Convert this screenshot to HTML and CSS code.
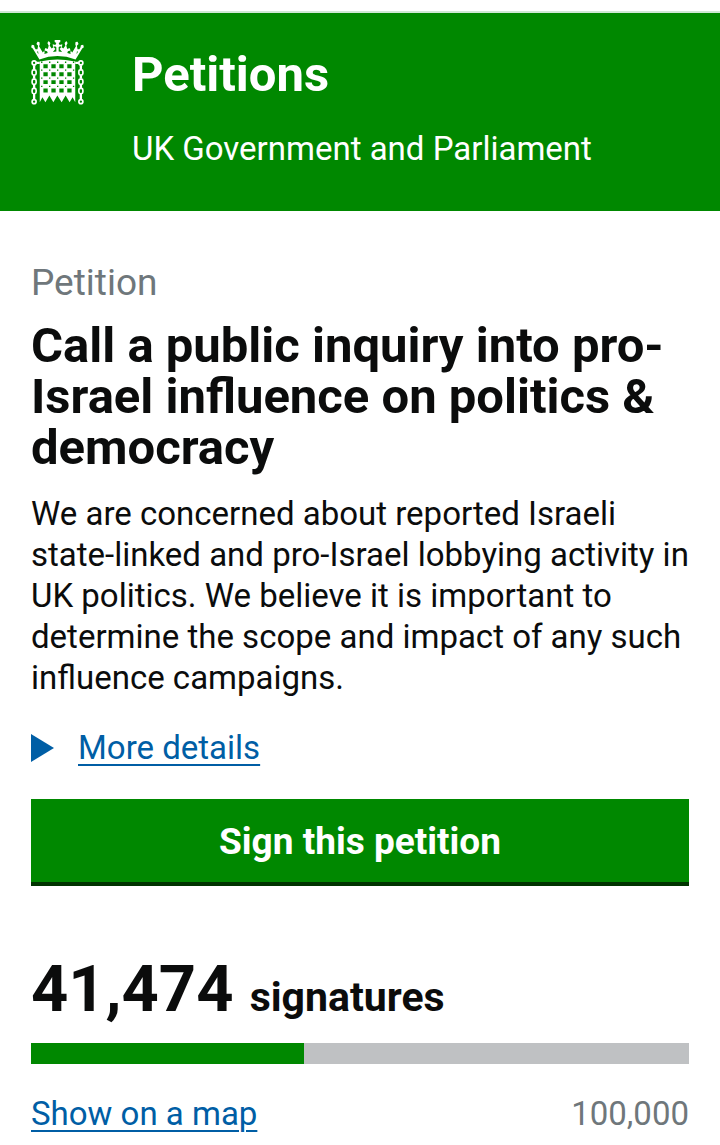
FILE: index.html
```html
<!DOCTYPE html>
<html lang="en">
  <head>
    <meta charset="UTF-8" />
    <meta name="viewport" content="width=device-width, initial-scale=1.0" />
    <title>Call a public inquiry into pro-Israel influence on politics & democracy - Petitions</title>
    <link rel="stylesheet" href="styles.css">
  </head>

  <body>
    <header class="header">
      <svg class="crest" viewBox="33 30 159 196" fill="#fff" aria-hidden="true">
        <!-- crown -->
        <path d="M58 89 L38 56 L33 52 L35 44 L42 46 L43 52 L55 73 L54 65 L46 65 L45 57 L52 58 L54 47 L49 42 L52 35 L58 36 L59 43 L57 49 L68 68 L71 64 L74 65 L73 72 L83 69 L81 64 L73 62 L76 54 L83 57 L86 47 L82 39 L86 33 L91 39 L89 47 L95 56 L101 51 L106 57 L101 63 L99 66 L109 65 L109 52 L105 49 L99 51 L98 43 L106 45 L109 39 L104 36 L104 30 L121 30 L121 36 L116 39 L119 45 L127 43 L126 51 L120 49 L116 52 L116 65 L126 66 L124 63 L119 57 L124 51 L130 56 L136 47 L134 39 L139 33 L143 39 L139 47 L142 57 L149 54 L152 62 L144 64 L142 69 L152 72 L151 65 L154 64 L157 68 L168 49 L166 43 L167 36 L173 35 L176 42 L171 47 L173 58 L180 57 L179 65 L171 65 L170 73 L182 52 L183 46 L190 44 L192 52 L187 56 L167 89 Q112 68 58 89Z" />
        <!-- grille with spikes -->
        <path fill-rule="evenodd" d="M59 94 H64 Q112 84 161 94 H166 V218 L158 203 L149 218 L137 197 L125 218 L112 197 L100 218 L88 197 L76 218 L67 203 L59 218Z
          M70 103h13v12h-13z M94 103h13v12h-13z M118 103h13v12h-13z M142 103h13v12h-13z
          M70 127h13v12h-13z M94 127h13v12h-13z M118 127h13v12h-13z M142 127h13v12h-13z
          M70 151h13v12h-13z M94 151h13v12h-13z M118 151h13v12h-13z M142 151h13v12h-13z
          M70 176h13v12h-13z M94 176h13v12h-13z M118 176h13v12h-13z M142 176h13v12h-13z" />
        <path d="M63 97H163M63 121H163M63 145H163M63 170H163" fill="none" stroke="#008800" stroke-width="4" stroke-dasharray="4 20" />
        <!-- chains -->
        <g fill="none" stroke="#fff" stroke-width="5">
          <circle cx="42" cy="99" r="6" />
          <rect x="36" y="120" width="12" height="16" rx="5" />
          <rect x="36" y="148" width="12" height="16" rx="5" />
          <rect x="36" y="176" width="12" height="16" rx="5" />
          <circle cx="42" cy="216" r="6" />
          <path d="M42 106V119M42 137V147M42 165V175M42 193V209M48 99H59" stroke-width="7" />
          <circle cx="183" cy="99" r="6" />
          <rect x="177" y="120" width="12" height="16" rx="5" />
          <rect x="177" y="148" width="12" height="16" rx="5" />
          <rect x="177" y="176" width="12" height="16" rx="5" />
          <circle cx="183" cy="216" r="6" />
          <path d="M183 106V119M183 137V147M183 165V175M183 193V209M166 99H177" stroke-width="7" />
        </g>
      </svg>
      <div class="header-text">
        <a class="header-title" href="#">Petitions</a>
        <span class="header-tagline">UK Government and Parliament</span>
      </div>
    </header>

    <main class="content">
      <p class="label">Petition</p>
      <h1 class="title">Call a public inquiry into pro-Israel influence on politics &amp; democracy</h1>
      <p class="intro">We are concerned about reported Israeli state-linked and pro-Israel lobbying activity in UK politics. We believe it is important to determine the scope and impact of any such influence campaigns.</p>

      <details class="details">
        <summary class="summary"><span class="summary-text">More details</span></summary>
      </details>

      <button class="sign-button" type="button">Sign this petition</button>

      <p class="count"><span class="count-number">41,474</span> signatures</p>
      <div class="graph">
        <div class="graph-bar" style="width: 41.474%"></div>
      </div>
      <div class="graph-footer">
        <a class="link" href="#">Show on a map</a>
        <span class="goal">100,000</span>
      </div>
    </main>
  </body>
</html>
```

FILE: styles.css
```css
* {
  box-sizing: border-box;
  margin: 0;
  padding: 0;
}

body {
  font-family: Roboto, sans-serif;
  font-size: 33px;
  line-height: 41px;
  color: #0b0c0c;
  background-color: #fff;
  padding-top: 11px;
}

.header {
  display: flex;
  gap: 48px;
  padding: 27px 31px 42px;
  color: #fff;
  background-color: #008800;
  border-top: 2px solid #cfe8d4;
}

.crest {
  width: 53px;
  height: 65px;
  flex-shrink: 0;
}

.header-text {
  display: flex;
  flex-direction: column;
  gap: 18px;
}

.header-title {
  font-size: 49px;
  font-weight: bold;
  line-height: 70px;
  color: #fff;
  text-decoration: none;
}

.content {
  padding: 49px 31px 8px;
}

.label {
  font-size: 37px;
  line-height: 46px;
  color: #6f777b;
}

.title {
  margin-top: 14px;
  font-size: 49px;
  line-height: 51px;
}

.intro {
  margin-top: 20px;
}

.details {
  margin-top: 29px;
}

.summary {
  display: flex;
  align-items: center;
  gap: 24px;
  color: #005ea5;
  list-style: none;
  cursor: pointer;
}

.summary::before {
  content: "";
  border-left: 23px solid #005ea5;
  border-top: 14px solid transparent;
  border-bottom: 14px solid transparent;
}

.summary-text,
.link {
  color: #005ea5;
  text-decoration: underline;
  text-decoration-thickness: 2px;
  text-underline-offset: 5px;
}

.sign-button {
  display: block;
  width: 100%;
  margin-top: 31px;
  padding: 20px 20px 18px;
  font: bold 37px/45px Roboto, sans-serif;
  color: #fff;
  background-color: #008800;
  border: none;
  border-bottom: 4px solid #003300;
  cursor: pointer;
}

.count {
  margin-top: 65px;
  font-size: 41px;
  font-weight: bold;
  line-height: 77px;
}

.count-number {
  margin-right: 6px;
  font-size: 65px;
}

.graph {
  height: 21px;
  margin-top: 7px;
  background-color: #bfc1c3;
}

.graph-bar {
  height: 100%;
  background-color: #008800;
}

.graph-footer {
  display: flex;
  justify-content: space-between;
  margin-top: 29px;
}

.goal {
  color: #6f777b;
}
```
